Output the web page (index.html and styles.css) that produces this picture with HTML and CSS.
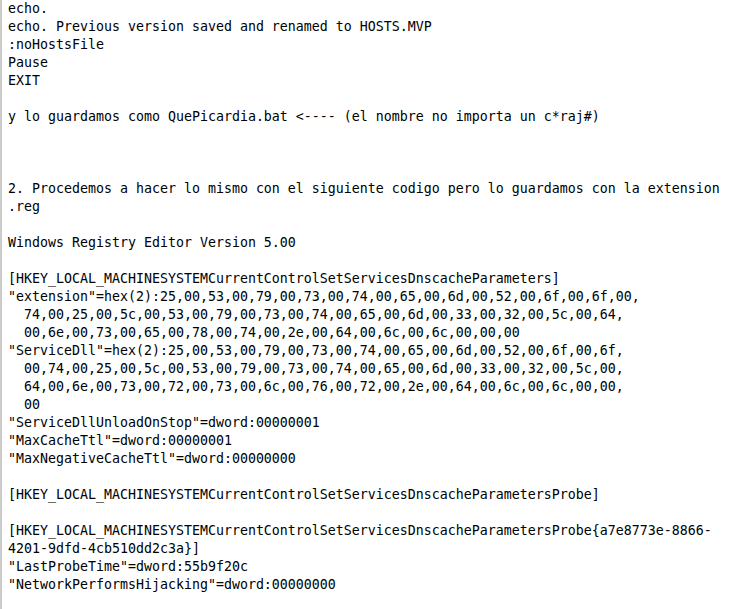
FILE: index.html
```html
<!DOCTYPE html>
<html lang="es">
<head>
<meta charset="utf-8">
<title>QuePicardia</title>
<link rel="stylesheet" href="styles.css">
</head>
<body>
<div class="code-block">
<pre class="code">echo.
echo. Previous version saved and renamed to HOSTS.MVP
:noHostsFile
Pause
EXIT

y lo guardamos como QuePicardia.bat &lt;---- (el nombre no importa un c*raj#)



2. Procedemos a hacer lo mismo con el siguiente codigo pero lo guardamos con la extension
.reg

Windows Registry Editor Version 5.00

[HKEY_LOCAL_MACHINESYSTEMCurrentControlSetServicesDnscacheParameters]
"extension"=hex(2):25,00,53,00,79,00,73,00,74,00,65,00,6d,00,52,00,6f,00,6f,00,
  74,00,25,00,5c,00,53,00,79,00,73,00,74,00,65,00,6d,00,33,00,32,00,5c,00,64,
  00,6e,00,73,00,65,00,78,00,74,00,2e,00,64,00,6c,00,6c,00,00,00
"ServiceDll"=hex(2):25,00,53,00,79,00,73,00,74,00,65,00,6d,00,52,00,6f,00,6f,
  00,74,00,25,00,5c,00,53,00,79,00,73,00,74,00,65,00,6d,00,33,00,32,00,5c,00,
  64,00,6e,00,73,00,72,00,73,00,6c,00,76,00,72,00,2e,00,64,00,6c,00,6c,00,00,
  00
"ServiceDllUnloadOnStop"=dword:00000001
"MaxCacheTtl"=dword:00000001
"MaxNegativeCacheTtl"=dword:00000000

[HKEY_LOCAL_MACHINESYSTEMCurrentControlSetServicesDnscacheParametersProbe]

[HKEY_LOCAL_MACHINESYSTEMCurrentControlSetServicesDnscacheParametersProbe{a7e8773e-8866-
4201-9dfd-4cb510dd2c3a}]
"LastProbeTime"=dword:55b9f20c
"NetworkPerformsHijacking"=dword:00000000
</pre>
</div>
</body>
</html>
```

FILE: styles.css
```css
html, body {
  margin: 0;
  padding: 0;
  background: #ffffff;
}

.code-block {
  border-left: 2px solid #cccccc;
  min-height: 609px;
  box-sizing: border-box;
  overflow: hidden;
}

.code {
  margin: 0;
  padding: 0 0 0 6px;
  font-family: "DejaVu Sans Mono", "Liberation Mono", monospace;
  font-size: 13.29px;
  line-height: 18px;
  color: #000000;
  white-space: pre;
}
```
